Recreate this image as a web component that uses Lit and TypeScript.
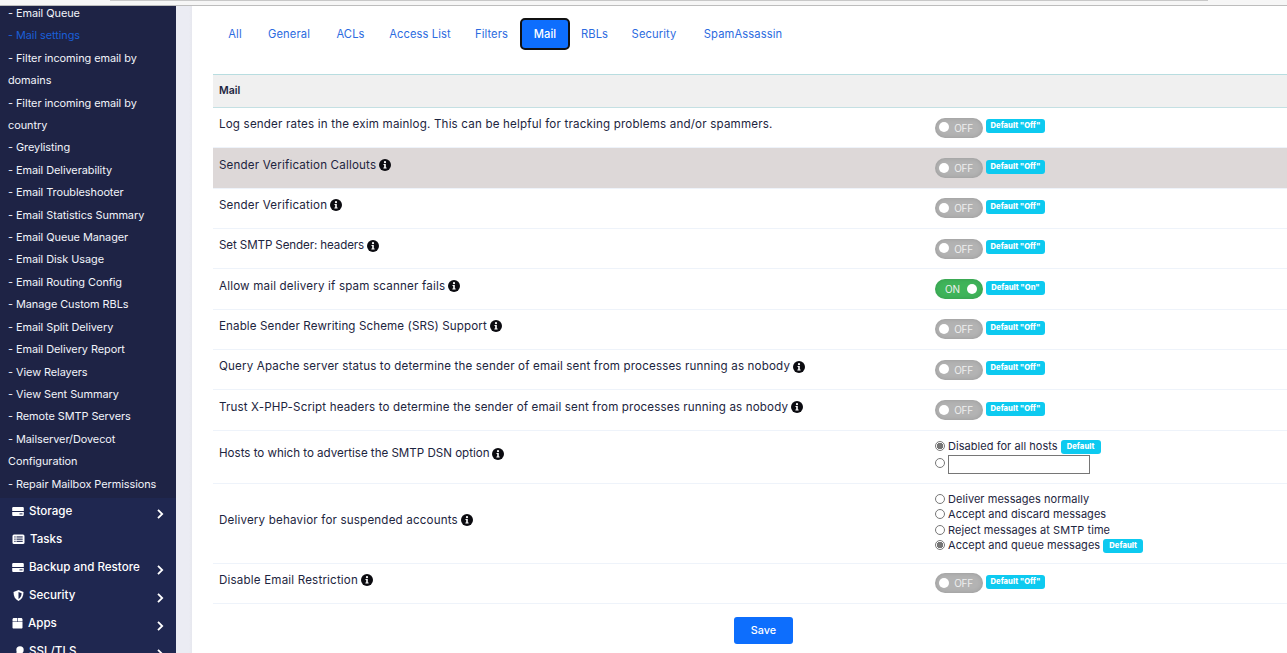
import { LitElement, html, css, svg } from "lit";
import { customElement } from "lit/decorators.js";

const subItems = [
  "- Email Queue", "- Mail settings", "- Filter incoming email by domains", "- Filter incoming email by country",
  "- Greylisting", "- Email Deliverability", "- Email Troubleshooter", "- Email Statistics Summary",
  "- Email Queue Manager", "- Email Disk Usage", "- Email Routing Config", "- Manage Custom RBLs",
  "- Email Split Delivery", "- Email Delivery Report", "- View Relayers", "- View Sent Summary",
  "- Remote SMTP Servers", "- Mailserver/Dovecot Configuration", "- Repair Mailbox Permissions",
];

const drive = svg`<path d="M1.500 2h9c.8 0 1.300.5 1.300 1.300V6H.2V3.300C.2 2.500.7 2 1.500 2Z"/><path d="M.2 7h11.600v2.700c0 .8-.5 1.300-1.300 1.300h-9c-.8 0-1.300-.5-1.300-1.300Z"/><rect x="7.500" y="8.400" width="3" height="1" fill="#1f2750"/>`;
const icons: Record<string, unknown> = {
  drive,
  tasks: svg`<rect x="0.500" y="1.500" width="12" height="9.500" rx="1.500"/><g fill="#1f2750"><rect x="2.300" y="3.400" width="1.300" height="1.100"/><rect x="2.300" y="5.600" width="1.300" height="1.100"/><rect x="2.300" y="7.800" width="1.300" height="1.100"/><rect x="4.500" y="3.400" width="6.200" height="1.100"/><rect x="4.500" y="5.600" width="6.200" height="1.100"/><rect x="4.500" y="7.800" width="6.200" height="1.100"/></g>`,
  shield: svg`<path d="M6.500 1 11.500 3C11.500 7.500 9.700 10.500 6.500 12 3.300 10.500 1.500 7.500 1.500 3Z"/><path d="M6.500 3 9.600 4.200C9.500 7 8.300 9 6.500 10Z" fill="#1f2750"/>`,
  box: svg`<path d="M.500 5h10v5.500c0 .7-.4 1.100-1.100 1.100H1.600c-.7 0-1.100-.4-1.100-1.100Z"/><path d="M2 1h3.200v3.400H.500V2.500C.500 1.600 1.100 1 2 1ZM5.800 1H9c.9 0 1.500.6 1.500 1.500v1.900H5.800Z"/>`,
  key: svg`<circle cx="8" cy="5" r="3.700"/><path d="M6 6 1 11v1.800h2.500l1-1v-1.300h1.300l2.500-2.500Z"/>`,
};

const menu = [
  { icon: "drive", label: "Storage", chevron: true, gap: 5 },
  { icon: "tasks", label: "Tasks", chevron: false, gap: 6 },
  { icon: "drive", label: "Backup and Restore", chevron: true, gap: 5 },
  { icon: "shield", label: "Security", chevron: true, gap: 5 },
  { icon: "box", label: "Apps", chevron: true, gap: 4 },
  { icon: "key", label: "SSL/TLS", chevron: true, gap: 5 },
];

const tabs = [
  { name: "All", w: 38 }, { name: "General", w: 70 }, { name: "ACLs", w: 53 }, { name: "Access List", w: 86 },
  { name: "Filters", w: 57 }, { name: "Mail", w: 50 }, { name: "RBLs", w: 49 }, { name: "Security", w: 70 },
  { name: "SpamAssassin", w: 108 },
];

type Row = {
  label: string; info?: boolean; on?: boolean; highlight?: boolean; ls?: number;
  options?: { text: string; checked?: boolean; def?: boolean }[]; field?: boolean;
};

const rows: Row[] = [
  { label: "Log sender rates in the exim mainlog. This can be helpful for tracking problems and/or spammers." },
  { label: "Sender Verification Callouts", info: true, highlight: true },
  { label: "Sender Verification", info: true },
  { label: "Set SMTP Sender: headers", info: true, ls: -0.11 },
  { label: "Allow mail delivery if spam scanner fails", info: true, on: true },
  { label: "Enable Sender Rewriting Scheme (SRS) Support", info: true, ls: 0.11 },
  { label: "Query Apache server status to determine the sender of email sent from processes running as nobody", info: true, ls: 0.157 },
  { label: "Trust X-PHP-Script headers to determine the sender of email sent from processes running as nobody", info: true, ls: 0.147 },
  { label: "Hosts to which to advertise the SMTP DSN option", info: true, field: true, ls: -0.02,
    options: [{ text: "Disabled for all hosts", checked: true, def: true }] },
  { label: "Delivery behavior for suspended accounts", info: true, options: [
    { text: "Deliver messages normally" }, { text: "Accept and discard messages" },
    { text: "Reject messages at SMTP time" }, { text: "Accept and queue messages", checked: true, def: true },
  ] },
  { label: "Disable Email Restriction", info: true },
];

@customElement("app-root")
export class AppRoot extends LitElement {
  static styles = css`
    :host { display: block; width: 1287px; height: 653px; overflow: hidden; position: relative; font-family: Inter, "Liberation Sans", sans-serif; color: #1d2540; background: #fff; }
    * { box-sizing: border-box; }
    .strip { position: absolute; top: 0; left: 0; right: 0; height: 6px; background: #f6f6f6; border-bottom: 1px solid #bdbdbd; z-index: 2; }
    .strip i { display: block; position: absolute; left: 110px; width: 1098px; top: 0; height: 1px; background: #c8c8c8; }
    .page { display: grid; grid-template-columns: 176px 16px 1fr; height: 653px; }
    .side { background: #1f2750; overflow: hidden; color: #fff; }
    .sub { background: #1e2345; padding: 2px 8px 3px; height: 498px; font-size: 10.900px; line-height: 22.400px; letter-spacing: -0.050px; }
    .sub div { color: #f2f4fa; }
    .sub .active { color: #1a5fd8; }
    .nav { display: flex; align-items: center; height: 28px; padding: 0 0 2px 12px; font-size: 11.600px; font-weight: 500; position: relative; }
    .nav svg.ic { width: 13px; height: 13px; fill: #fff; flex: none; margin-top: 1px; }
    .nav svg.chev { width: 7px; height: 10px; position: absolute; left: 157px; top: 11px; fill: none; stroke: #fff; stroke-width: 1.800; }
    .gutter { background: linear-gradient(90deg, #ebecf3 0 13px, #e6e7ee 100%); }
    .main { padding: 18px 0 0 21px; min-width: 0; }
    .tabs { display: flex; height: 32px; margin-left: 3px; margin-bottom: 24px; }
    .tab { font-size: 11.200px; letter-spacing: 0.100px; line-height: 32px; color: #2c6be0; text-align: center; white-space: nowrap; flex: none; }
    .tab.active { background: #0d6efd; color: #fff; border: 2px solid #111; border-radius: 5px; line-height: 28px; font-weight: 500; }
    .head { height: 34px; background: #f0f0f0; border-top: 1px solid #b8dde0; border-bottom: 1px solid #c4e0e3; padding: 0 6px 1px; display: flex; align-items: center; font-size: 10.500px; font-weight: 600; color: #1d2540; }
    .row { display: grid; grid-template-columns: 722px 1fr; border-bottom: 1px solid #eef3fa; height: 40.350px; }
    .row.hl { background: #ddd8d8; }
    .row.m1 { height: 53px; }
    .row.m2 { height: 80px; }
    .label { display: flex; align-items: center; padding: 0 0 7px 6px; font-size: 11.600px; letter-spacing: 0.177px; white-space: nowrap; gap: 3px; }
    .info { width: 12px; height: 12px; flex: none; display: block; margin-top: 1px; }
    .val { display: flex; align-items: center; }
    .toggle { display: flex; align-items: center; justify-content: flex-end; width: 48px; height: 20px; border-radius: 10px; background: #b3b3b3; box-shadow: inset 0 0 5px rgba(0,0,0,.14); color: #efefef; font-size: 10px; letter-spacing: -0.200px; padding: 0 10px 0 5px; position: relative; }
    .knob { width: 10px; height: 10px; border-radius: 50%; background: #fff; position: absolute; left: 4px; top: 4.500px; }
    .toggle.on { background: #3fb45a; justify-content: flex-start; padding: 0 0 0 10px; }
    .toggle.on .knob { left: 32px; }
    .badge { display: inline-block; background: #0dcaf0; color: #fff; font-size: 7.600px; font-weight: 800; line-height: 14px; height: 14px; padding: 0 6px; border-radius: 3px; white-space: nowrap; }
    .badge.top { margin: -3px 0 0 3px; width: 59px; text-align: center; padding: 0; }
    .opts { display: flex; flex-direction: column; font-size: 11px; letter-spacing: 0.050px; line-height: 15.500px; white-space: nowrap; padding-bottom: 1px; }
    .opt { display: flex; align-items: center; }
    input[type=radio] { appearance: none; width: 10px; height: 10px; margin: 0 3px 2px 0; border: 1px solid #777; border-radius: 50%; background: #fff; flex: none; }
    input[type=radio]:checked { background: radial-gradient(circle, #757575 0 3px, #fff 3.500px); }
    .opt .badge { margin-left: 3px; }
    .txt { display: block; width: 142px; height: 19px; border: 1px solid #767676; padding: 0; margin: 0; background: #fff; }
    .foot { display: flex; justify-content: center; padding: 13px 0 0 0; width: 1101px; }
    button { width: 59px; height: 27px; background: #0d6efd; color: #fff; border: 0; border-radius: 3px; font: 500 10.800px Inter, "Liberation Sans", sans-serif; }
  `;

  private info() {
    return html`<svg class="info" viewBox="0 0 12 12" aria-hidden="true"><circle cx="6" cy="6" r="6" fill="#0b0b10"/><circle cx="6" cy="3.200" r="1.100" fill="#fff"/><path d="M4.500 5h2.300v3.500h.8v1h-3.200v-1h.8V6h-.7Z" fill="#fff"/></svg>`;
  }

  private value(r: Row) {
    if (r.options) {
      return html`<div class="opts">
        ${r.options.map((o) => html`<label class="opt"><input type="radio" name=${r.label} ?checked=${!!o.checked} />${o.text}${o.def ? html`<span class="badge">Default</span>` : ""}</label>`)}
        ${r.field ? html`<div class="opt"><input type="radio" name=${r.label} /><input class="txt" type="text" /></div>` : ""}
      </div>`;
    }
    return html`<div class="toggle ${r.on ? "on" : ""}"><span class="knob"></span>${r.on ? "ON" : "OFF"}</div>
      <span class="badge top">Default "${r.on ? "On" : "Off"}"</span>`;
  }

  render() {
    return html`
      <div class="strip"><i></i></div>
      <div class="page">
        <aside class="side">
          <div class="sub">
            ${subItems.map((s) => html`<div class=${s === "- Mail settings" ? "active" : ""}>${s}</div>`)}
          </div>
          ${menu.map((m) => html`<div class="nav">
            <svg class="ic" viewBox="0 0 13 13" style="margin-right:${m.gap - 1}px">${icons[m.icon]}</svg>${m.label}
            ${m.chevron ? html`<svg class="chev" viewBox="0 0 7 10"><path d="M1 .8l4.200 4.200L1 9.200"/></svg>` : ""}
          </div>`)}
        </aside>
        <div class="gutter"></div>
        <main class="main">
          <nav class="tabs">
            ${tabs.map((t) => html`<div class="tab ${t.name === "Mail" ? "active" : ""}" style="width:${t.w}px">${t.name}</div>`)}
          </nav>
          <div class="head">Mail</div>
          ${rows.map((r, i) => html`<div class="row ${r.highlight ? "hl" : ""} ${i === 8 ? "m1" : ""} ${i === 9 ? "m2" : ""}">
            <div class="label" style=${r.ls !== undefined ? `letter-spacing:${r.ls}px` : ""}>${r.label}${r.info ? this.info() : ""}</div>
            <div class="val">${this.value(r)}</div>
          </div>`)}
          <div class="foot"><button>Save</button></div>
        </main>
      </div>
    `;
  }
}
